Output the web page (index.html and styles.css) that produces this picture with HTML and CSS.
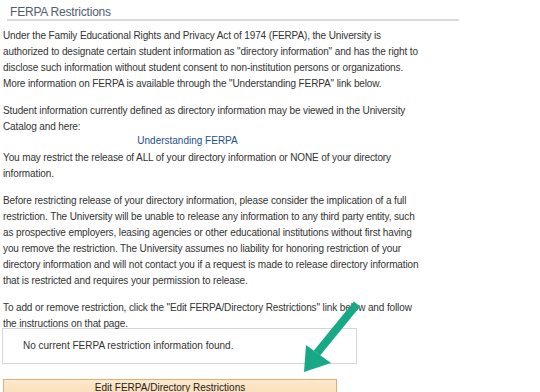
FILE: index.html
```html
<!DOCTYPE html>
<html>
<head>
<meta charset="utf-8">
<link rel="stylesheet" href="styles.css">
</head>
<body>
<div class="page">
  <div class="header"><span class="title">FERPA Restrictions</span></div>
  <div class="content">
    <p class="para first">Under the Family Educational Rights and Privacy Act of 1974 (FERPA), the University is<br>authorized to designate certain student information as "directory information" and has the right to<br>disclose such information without student consent to non-institution persons or organizations.<br>More information on FERPA is available through the "Understanding FERPA" link below.</p>
    <p class="para">Student information currently defined as directory information may be viewed in the University<br>Catalog and here:</p>
    <div class="link-row"><a class="link" href="#">Understanding FERPA</a></div>
    <p class="para after-link">You may restrict the release of ALL of your directory information or NONE of your directory<br>information.</p>
    <p class="para">Before restricting release of your directory information, please consider the implication of a full<br>restriction. The University will be unable to release any information to any third party entity, such<br>as prospective employers, leasing agencies or other educational institutions without first having<br>you remove the restriction. The University assumes no liability for honoring restriction of your<br>directory information and will not contact you if a request is made to release directory information<br>that is restricted and requires your permission to release.</p>
    <p class="para">To add or remove restriction, click the "Edit FERPA/Directory Restrictions" link below and follow<br>the instructions on that page.</p>
    <div class="notice">No current FERPA restriction information found.</div>
    <div class="button">Edit FERPA/Directory Restrictions</div>
  </div>
  <svg class="arrow" width="540" height="392" viewBox="0 0 540 392">
    <line x1="357" y1="304" x2="317" y2="353" stroke="#17a886" stroke-width="8"/>
    <polygon points="304,372 306,345 331,363" fill="#17a886"/>
  </svg>
</div>
</body>
</html>
```

FILE: styles.css
```css
html, body {
  margin: 0;
  padding: 0;
  background: #ffffff;
}

.page {
  position: relative;
  width: 540px;
  height: 392px;
  overflow: hidden;
  font-family: "Liberation Sans", Arial, sans-serif;
  color: #333333;
}

.header {
  margin-left: 7px;
  width: 452px;
  padding: 2px 0 1px 3px;
  border-bottom: 2px solid #dcdcdc;
  box-sizing: border-box;
  height: 21px;
}

.title {
  font-size: 12px;
  line-height: 15px;
  color: #4f5e6f;
  letter-spacing: -0.2px;
}

.content {
  padding-left: 3px;
}

.para {
  margin: 11px 0 0 0;
  font-size: 10px;
  line-height: 16px;
  letter-spacing: -0.12px;
  white-space: nowrap;
}

.para.first {
  margin-top: 7px;
}

.link-row {
  width: 369px;
  text-align: center;
  margin-top: -1px;
  line-height: 10px;
}

.link {
  font-size: 10px;
  color: #1f4f8c;
  text-decoration: none;
}

.para.after-link {
  margin-top: 4px;
}

.notice {
  margin: -4px 0 0 -1px;
  width: 355px;
  height: 36px;
  box-sizing: border-box;
  border: 1px solid #d3d5db;
  padding-left: 20px;
  font-size: 10px;
  line-height: 34px;
}

.button {
  margin-top: 15px;
  width: 334px;
  height: 20px;
  box-sizing: border-box;
  border: 1px solid #e6ac73;
  background: linear-gradient(#fde9cc, #fbdcb2);
  font-size: 10px;
  line-height: 15px;
  text-align: center;
  color: #222222;
}

.arrow {
  position: absolute;
  left: 0;
  top: 0;
  pointer-events: none;
}
```
